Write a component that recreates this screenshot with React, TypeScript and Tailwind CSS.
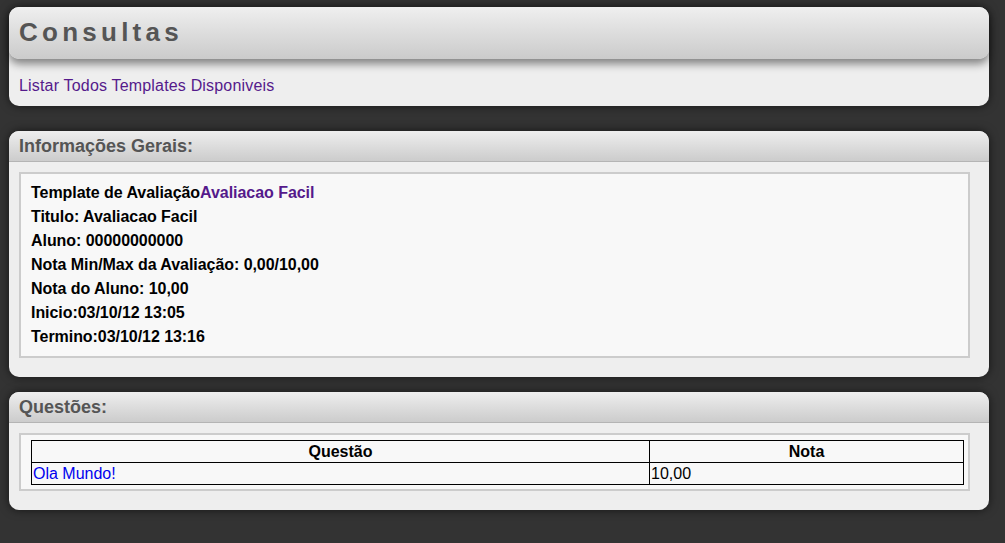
import React from "react";

const font = { fontFamily: '"Liberation Sans", Arial, sans-serif' };

const infoLines = [
  "Titulo: Avaliacao Facil",
  "Aluno: 00000000000",
  "Nota Min/Max da Avaliação: 0,00/10,00",
  "Nota do Aluno: 10,00",
  "Inicio:03/10/12 13:05",
  "Termino:03/10/12 13:16",
];

const SectionHeader = ({ title }: { title: string }) => (
  <div className="h-[31px] rounded-t-[10px] border-b border-[#b4b4b4] bg-gradient-to-b from-[#eeeeee] to-[#cccccc] pl-[10px] text-[18px] font-bold leading-[30px] text-[#555555]">
    {title}
  </div>
);

export default function App() {
  return (
    <div className="min-h-screen bg-[#333333] pt-[7px] pb-[30px]" style={font}>
      {/* Consultas */}
      <div className="ml-[9px] w-[980px] rounded-[10px] bg-[#eeeeee] shadow-[0_0_10px_rgba(0,0,0,0.6)]">
        <div className="relative z-10 h-[52px] rounded-[10px] bg-gradient-to-b from-[#efefef] to-[#cbcbcb] pl-[10px] pt-[10px] text-[26px] font-bold leading-[30px] tracking-[4.25px] text-[#555555] shadow-[0_5px_8px_rgba(0,0,0,0.45)]">
          Consultas
        </div>
        <div className="pl-[10px] pt-[18px] pb-[11px] text-[16px] leading-[18px] tracking-[0.18px]">
          <a href="#" className="text-[#551a8b]">
            Listar Todos Templates Disponiveis
          </a>
        </div>
      </div>

      {/* Informações Gerais */}
      <div className="mt-[25px] ml-[9px] w-[980px] rounded-[10px] bg-[#eeeeee] pb-[19px] shadow-[0_0_10px_rgba(0,0,0,0.6)]">
        <SectionHeader title="Informações Gerais:" />
        <div className="mt-[10px] ml-[10px] w-[951px] border-2 border-[#cccccc] bg-[#f8f8f8] px-[10px] pt-[7px] pb-[7px] text-[16px] font-bold leading-[24px] tracking-[-0.05px] text-black">
          <div>
            Template de Avaliação
            <a href="#" className="text-[#551a8b]">
              Avaliacao Facil
            </a>
          </div>
          {infoLines.map((line) => (
            <div key={line}>{line}</div>
          ))}
        </div>
      </div>

      {/* Questões */}
      <div className="mt-[15px] ml-[9px] w-[980px] rounded-[10px] bg-[#eeeeee] pb-[19px] shadow-[0_0_10px_rgba(0,0,0,0.6)]">
        <SectionHeader title="Questões:" />
        <div className="mt-[10px] ml-[10px] w-[951px] border-2 border-[#cccccc] bg-[#f8f8f8] px-[10px] pt-[5px] pb-[4px]">
          <table className="w-[933px] border-collapse border border-black text-[16px] leading-[21px] text-black">
            <thead>
              <tr>
                <th className="w-[618px] border border-black px-[1px] text-center font-bold">Questão</th>
                <th className="border border-black px-[1px] text-center font-bold">Nota</th>
              </tr>
            </thead>
            <tbody>
              <tr>
                <td className="border border-black px-[1px]">
                  <a href="#" className="text-[#0000ee]">
                    Ola Mundo!
                  </a>
                </td>
                <td className="border border-black px-[1px]">10,00</td>
              </tr>
            </tbody>
          </table>
        </div>
      </div>
    </div>
  );
}
